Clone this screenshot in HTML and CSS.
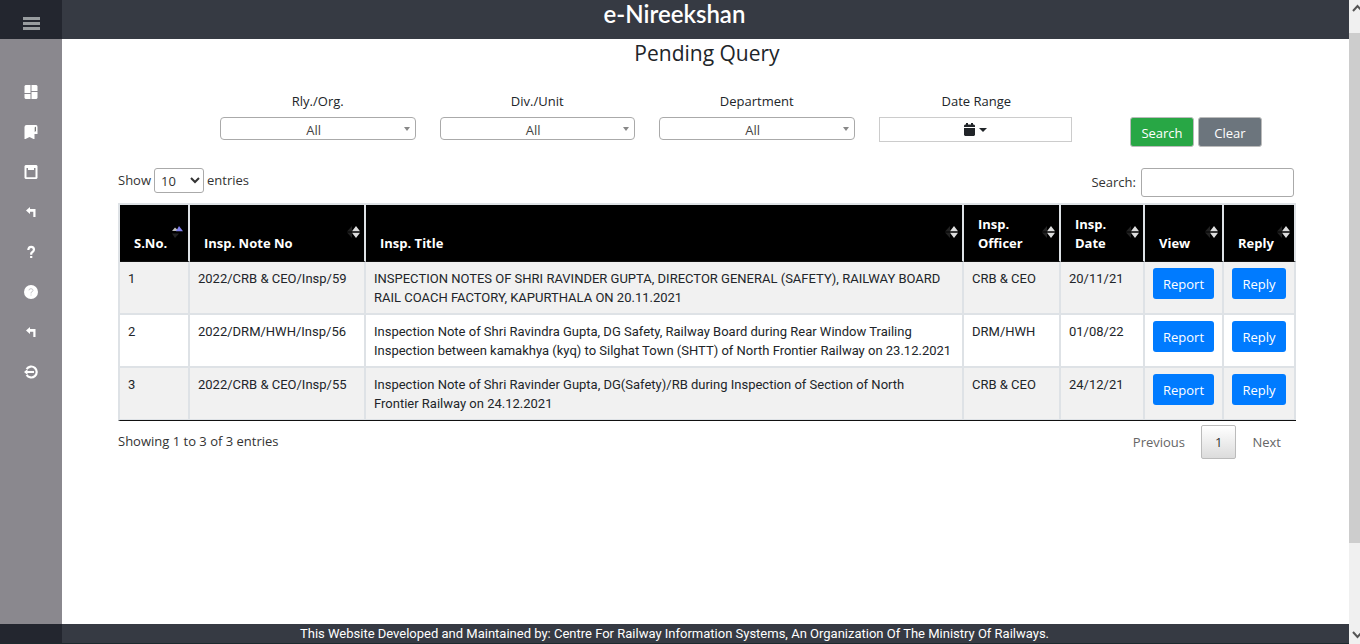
FILE: index.html
```html
<!DOCTYPE html>
<html lang="en">
<head>
<meta charset="utf-8">
<title>e-Nireekshan</title>
<link rel="stylesheet" href="styles.css">
</head>
<body>
<svg class="defs" aria-hidden="true">
  <symbol id="sort" viewBox="0 0 14 12"><path d="M5 0 0 5.500h5zM5 12 0 6.500h5z" fill="#222"/><path d="M9 0l4 5.300H5zM9 12l4-5.300H5z" fill="#ddd"/></symbol>
  <symbol id="sorted" viewBox="0 0 14 12"><path d="M4 1.500 8 5H1z" fill="#bbb"/><path d="M4 12 8 7.500H1z" fill="#222"/><path d="M8 0l4 5.200H5z" fill="#8080ee"/></symbol>
  <symbol id="turn" viewBox="0 0 14 14"><path d="M2 5.500 6 2v2h5.500v8H9.300V6.800H6V9z" fill="#fff"/></symbol>
</svg>
<div class="app">
  <header class="header">
    <button class="menu" aria-label="Toggle menu"><span></span><span></span><span></span></button>
    <h1>e-Nireekshan</h1>
  </header>
  <div class="body">
    <nav class="sidebar" aria-label="Main">
      <a href="#" aria-label="Dashboard"><svg viewBox="0 0 14 14"><path d="M1.500 0H6.500V8H.5V1zM.5 9h6v5h-5l-1-1zM7.500 0h5l1 1v5h-6zM7.500 7h6v6l-1 1h-5z" fill="#fff"/></svg></a>
      <a href="#" aria-label="Bookmarks"><svg viewBox="0 0 14 14"><path d="M2.500 0H12q1.500 0 1.500 2v7H10.500v5.500L5.500 12l-5 2.500V2Q.5 0 2.500 0z" fill="#fff"/><path d="M10.700 7V3q0-1.200.7-1.200T12 3v3z" fill="#777"/></svg></a>
      <a href="#" aria-label="Clipboard"><svg viewBox="0 0 14 14"><path d="M1.500 0H12.500l1 1v12l-1 1h-11l-1-1V1zM2.500 3v9.200h9V3H10v2H4V3z" fill="#fff" fill-rule="evenodd"/></svg></a>
      <a href="#" aria-label="Returned"><svg><use href="#turn"/></svg></a>
      <a href="#" aria-label="Query"><svg viewBox="0 0 14 14"><path d="M4.300 5Q4.500 1.800 7.200 1.800T10 4.600Q10 6 8.500 7T7.200 9v.7M7.200 11v2" fill="none" stroke="#fff" stroke-width="2.200"/></svg></a>
      <a href="#" aria-label="Help"><svg viewBox="0 0 14 14"><circle cx="7" cy="7" r="7" fill="#fff"/><path d="M5 5.300Q5 3.700 7 3.700t2 1.700Q9 6.500 7 7.500v1M7 9.500v1" fill="none" stroke="#c4c4c8"/></svg></a>
      <a href="#" aria-label="Back"><svg><use href="#turn"/></svg></a>
      <a href="#" aria-label="Log out"><svg viewBox="0 0 14 14"><path d="M2.600 4A5.500 5.500 0 1 1 2.600 10" fill="none" stroke="#fff" stroke-width="2.200"/><path d="M0 7l3.500-3v2H10v2H3.500v2z" fill="#fff"/></svg></a>
    </nav>
    <main class="content">
      <h2>Pending Query</h2>
      <form class="filters">
        <div class="field"><label for="org">Rly./Org.</label><div class="picker"><select id="org"><option>All</option></select></div></div>
        <div class="field"><label for="unit">Div./Unit</label><div class="picker"><select id="unit"><option>All</option></select></div></div>
        <div class="field"><label for="dept">Department</label><div class="picker"><select id="dept"><option>All</option></select></div></div>
        <div class="field"><label for="range">Date Range</label>
          <button type="button" class="range" id="range"><svg viewBox="0 0 24 14"><path d="M2 1.500h1V0h2v1.500h3V0h2v1.500h1l1 1V4H1V2.500zM1 5h11v7l-1 1H2l-1-1z" fill="#212529"/><path d="M16 5h8l-4 4z" fill="#212529"/></svg></button></div>
        <div class="actions"><button type="button" class="search">Search</button><button type="reset" class="clear">Clear</button></div>
      </form>
      <div class="tools">
        <label>Show <select><option>10</option></select> entries</label>
        <label>Search: <input type="search"></label>
      </div>
      <table>
        <colgroup><col class="c-no"><col class="c-note"><col><col class="c-officer"><col class="c-date"><col class="c-view"><col class="c-reply"></colgroup>
        <thead><tr>
          <th>S.No.<svg><use href="#sorted"/></svg></th>
          <th>Insp. Note No<svg><use href="#sort"/></svg></th>
          <th>Insp. Title<svg><use href="#sort"/></svg></th>
          <th>Insp. Officer<svg><use href="#sort"/></svg></th>
          <th>Insp. Date<svg><use href="#sort"/></svg></th>
          <th>View<svg><use href="#sort"/></svg></th>
          <th>Reply<svg><use href="#sort"/></svg></th>
        </tr></thead>
        <tbody>
          <tr><td>1</td><td>2022/CRB &amp; CEO/Insp/59</td><td>INSPECTION NOTES OF SHRI RAVINDER GUPTA, DIRECTOR GENERAL (SAFETY), RAILWAY BOARD RAIL COACH FACTORY, KAPURTHALA ON 20.11.2021</td><td>CRB &amp; CEO</td><td>20/11/21</td><td class="act"><button>Report</button></td><td class="act"><button>Reply</button></td></tr>
          <tr><td>2</td><td>2022/DRM/HWH/Insp/56</td><td>Inspection Note of Shri Ravindra Gupta, DG Safety, Railway Board during Rear Window Trailing Inspection between kamakhya (kyq) to Silghat Town (SHTT) of North Frontier Railway on 23.12.2021</td><td>DRM/HWH</td><td>01/08/22</td><td class="act"><button>Report</button></td><td class="act"><button>Reply</button></td></tr>
          <tr><td>3</td><td>2022/CRB &amp; CEO/Insp/55</td><td>Inspection Note of Shri Ravinder Gupta, DG(Safety)/RB during Inspection of Section of North<br>Frontier Railway on 24.12.2021</td><td>CRB &amp; CEO</td><td>24/12/21</td><td class="act"><button>Report</button></td><td class="act"><button>Reply</button></td></tr>
        </tbody>
      </table>
      <div class="summary">
        <p>Showing 1 to 3 of 3 entries</p>
        <div class="pages"><button>Previous</button><button class="current">1</button><button>Next</button></div>
      </div>
    </main>
  </div>
  <footer class="footer"><p>This Website Developed and Maintained by: Centre For Railway Information Systems, An Organization Of The Ministry Of Railways.</p></footer>
  <div class="scroll" aria-hidden="true">
    <svg viewBox="0 0 11 11"><path d="M4 8l4.500-5 4.500 5" fill="none" stroke="#555" stroke-width="2"/></svg>
    <div class="thumb"></div>
    <svg viewBox="0 0 11 11"><path d="M4 2l4.500 5L13 2" fill="none" stroke="#555" stroke-width="2"/></svg>
  </div>
</div>
</body>
</html>
```
FILE: styles.css
```css
* { box-sizing: border-box; }
body { margin: 0; background: #fff; color: #212529; font: 13px/19px "Open Sans", "Noto Sans", sans-serif; }
button, select, input { font: inherit; color: inherit; }
h1, h2, p { margin: 0; }
.defs { position: absolute; width: 0; height: 0; }
.app { display: grid; grid-template-columns: 1fr 11px; grid-template-rows: auto 1fr auto; min-height: 100vh; }

.header { display: grid; grid-template-columns: 62px 1fr; min-height: 39px; background: #363a43; }
.menu { display: flex; flex-direction: column; align-items: center; justify-content: center; gap: 2px; padding: 8px 0 0; border: 0; background: #23262f; }
.menu span { width: 17px; height: 3px; background: #989c9f; }
.header h1 { padding-right: 62px; color: #fff; font: 600 24px/28px Lato, sans-serif; text-align: center; }

.body { display: grid; grid-template-columns: 62px 1fr; }
.sidebar { display: flex; flex-direction: column; align-items: center; gap: 26px; padding-top: 46px; background: #8a888e; }
.sidebar a, .sidebar svg { display: block; width: 14px; height: 14px; }
.content { min-width: 0; padding: 0 53px 0 56px; }
.content h2 { font-size: 21px; font-weight: 400; line-height: 28px; text-align: center; }

.filters { display: grid; grid-template-columns: repeat(4, 1fr) auto; gap: 24px; padding: 25px 34px 0 102px; }
.field { display: flex; flex-direction: column; gap: 6px; text-align: center; }
.picker { position: relative; }
.picker::after { content: ""; position: absolute; right: 6px; top: 10px; border: 3px solid transparent; border-top: 4px solid #888; border-bottom: 0; pointer-events: none; }
.picker select { display: block; width: 100%; height: 23px; padding: 3px 10px 0 2px; border: 1px solid #aaa; border-radius: 4px; background: #fff; color: #444; appearance: none; text-align: center; text-align-last: center; }
.range { display: flex; align-items: center; justify-content: center; width: calc(100% - 2px); height: 25px; padding: 0; border: 1px solid #ccc; background: #fff; }
.range svg { width: 24px; height: 14px; }
.actions { display: flex; align-items: flex-start; gap: 4px; padding: 25px 0 0 32px; }
.actions button { width: 64px; height: 30px; padding: 2px 0 0; border: 1px solid #bbb; border-radius: 3px; color: #fff; }
.actions .search { background: #28a745; }
.actions .clear { background: #6c757d; }

.tools { display: flex; justify-content: space-between; align-items: flex-start; padding: 21px 2px 6px 0; color: #333; }
.tools label { display: flex; align-items: center; gap: 3px; }
.tools select { width: 50px; height: 25px; padding: 0 0 0 2px; border: 1px solid #aaa; border-radius: 3px; background: #fff; }
.tools input { width: 153px; height: 29px; margin-left: 2px; border: 1px solid #aaa; border-radius: 3px; background: #fff; }

table { width: 100%; table-layout: fixed; border-collapse: separate; border-spacing: 0; border: 2px solid #dee2e6; border-width: 2px 0 1px 2px; border-bottom-color: #111; }
.c-no { width: 70px; }
.c-note { width: 176px; }
.c-officer { width: 97px; }
.c-date { width: 84px; }
.c-view { width: 79px; }
.c-reply { width: 72px; }
th { position: relative; padding: 10px 18px 8px 14px; border-right: 2px solid #dee2e6; border-bottom: 1px solid #111; background: #000; color: #fff; text-align: left; vertical-align: bottom; }
th svg { position: absolute; right: 3px; top: 21px; width: 14px; height: 12px; }
td { padding: 7px 8px 6px; border-right: 2px solid #dee2e6; border-bottom: 2px solid #dee2e6; text-align: left; vertical-align: top; }
tbody { font-family: Roboto, sans-serif; }
tbody tr:nth-child(odd) { background: #f1f1f1; }
tbody tr:last-child td { border-bottom-width: 1px; }
td.act { padding: 6px 8px 0; }
.act button { display: block; width: 100%; height: 31px; padding: 2px 0 0; border: 0; border-radius: 3px; background: #007bff; color: #fff; font-family: "Open Sans", sans-serif; }

.summary { display: flex; justify-content: space-between; padding: 4px 1px 0 0; color: #333; }
.summary p { padding-top: 7px; }
.pages { display: flex; gap: 2px; }
.pages button { height: 34px; padding: 0 13px; border: 1px solid transparent; border-radius: 2px; background: none; color: #666; }
.pages .current { border-color: #bbb; background: linear-gradient(#fff, #dcdcdc); color: #333; }

.footer { grid-row: 3; display: grid; grid-template-columns: 1fr; border-bottom: 1px solid #1d2a2e; background: linear-gradient(90deg, #23262f 62px, #363a43 62px); color: #fff; font-family: Roboto, sans-serif; text-align: center; }
.scroll { grid-column: 2; grid-row: 1 / 4; display: flex; flex-direction: column; padding: 3px 0; background: #f0f0f0; }
.scroll svg { width: 11px; height: 11px; }
.thumb { flex: 0 0 80%; margin: 19px 0 auto; background: #cdcdcd; }
```
